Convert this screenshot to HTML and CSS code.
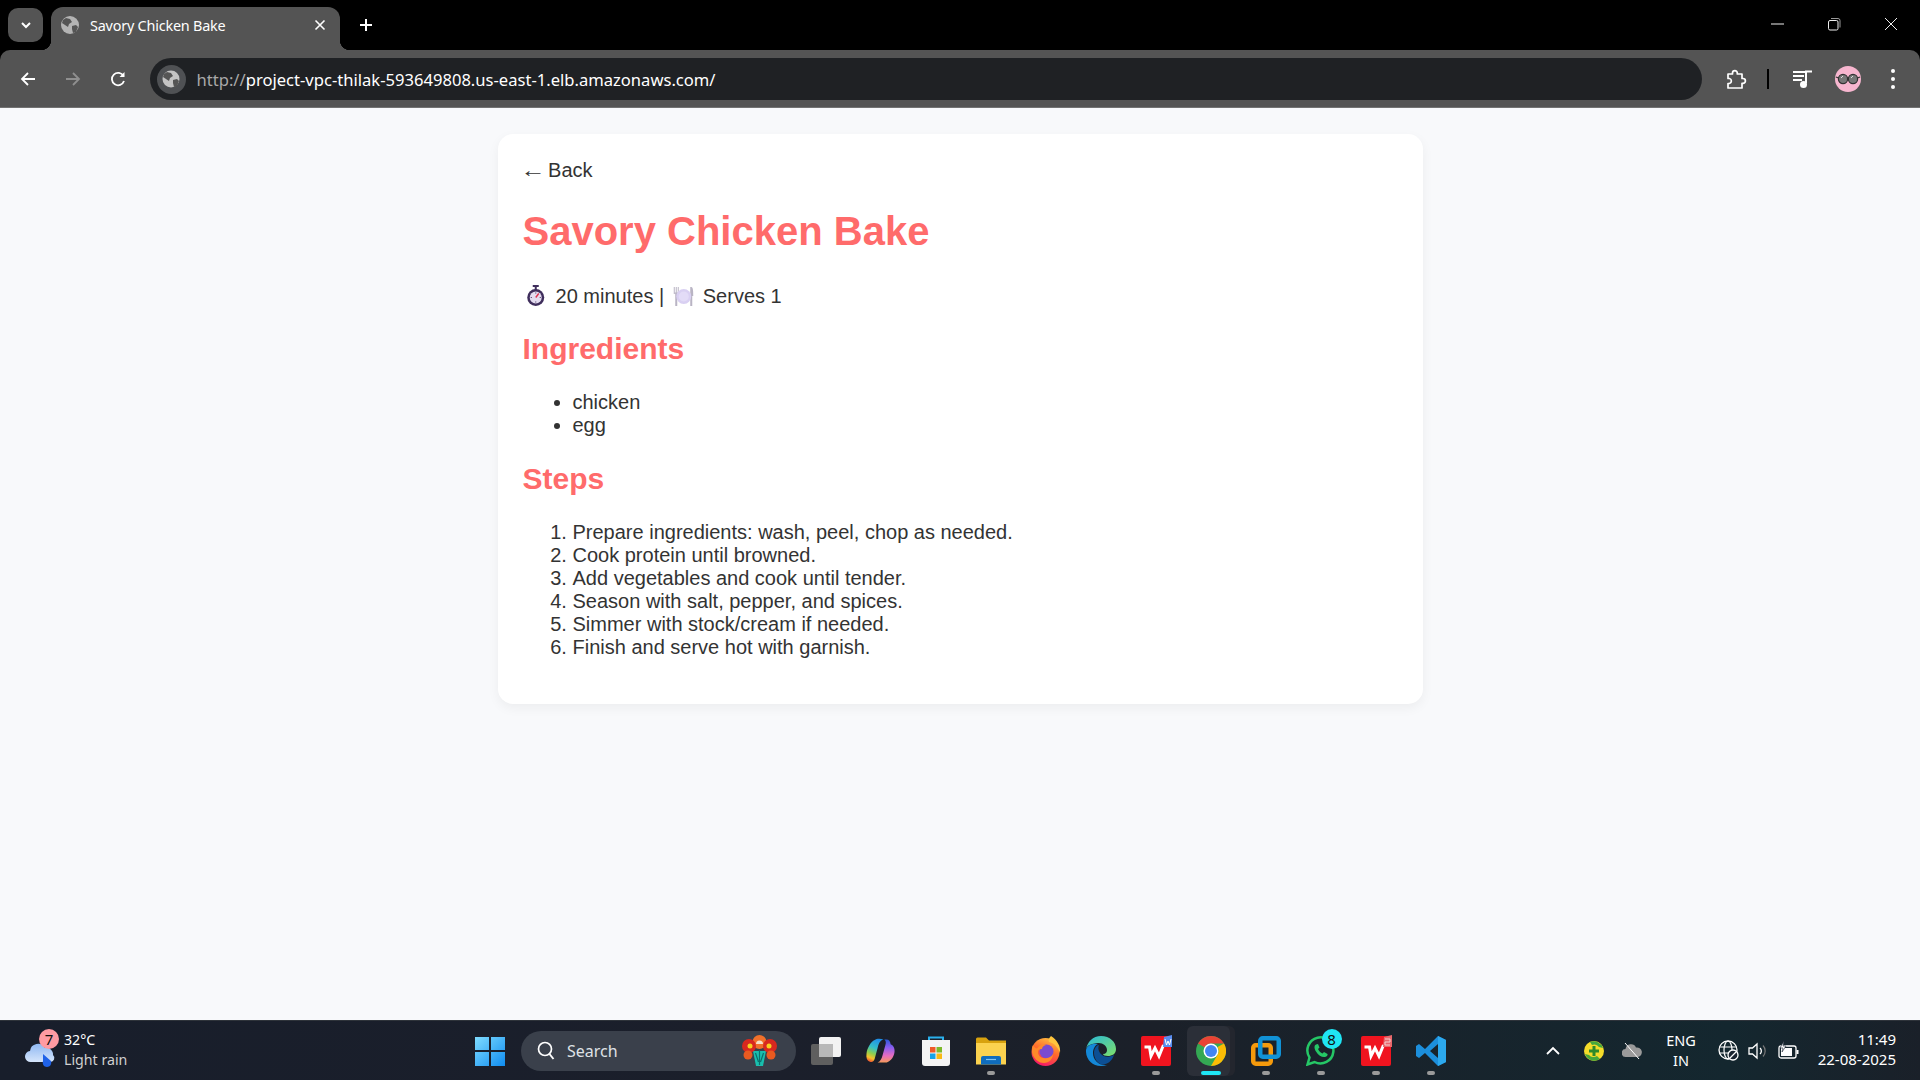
FILE: index.html
```html
<!DOCTYPE html>
<html lang="en">
<head>
<meta charset="utf-8">
<title>Savory Chicken Bake</title>
<link rel="stylesheet" href="styles.css">
</head>
<body>
<header class="browser">
  <div class="tabstrip">
    <div class="tab-toggle">
      <svg width="14" height="14" viewBox="0 0 14 14"><path d="M3 5l4 4 4-4" fill="none" stroke="#fff" stroke-width="2"/></svg>
    </div>
    <div class="tab">
      <svg class="favicon" width="18" height="18" viewBox="0 0 18 18"><circle cx="9" cy="9" r="9" fill="#b4b4b4"/><path d="M5 2l4 1 2 3-3 2-1 3-3-2-3-2 1-3zM11 10l4-1 2 2-2 5-3 1-1-4z" fill="#555"/></svg>
      <span class="tab-title">Savory Chicken Bake</span>
      <svg class="tab-close" width="12" height="12" viewBox="0 0 12 12"><path d="M1.5 1.5l9 9M10.500 1.5l-9 9" stroke="#fff" stroke-width="1.600"/></svg>
    </div>
    <svg class="newtab" width="14" height="14" viewBox="0 0 14 14"><path d="M7 1v12M1 7h12" stroke="#fff" stroke-width="2"/></svg>
    <div class="winctl">
      <svg width="14" height="14" viewBox="0 0 14 14"><path d="M1 7h13" stroke="#eee" stroke-width="1"/></svg>
      <svg width="14" height="14" viewBox="0 0 14 14"><rect x="1.500" y="3.500" width="9.500" height="9.500" rx="1.500" fill="none" stroke="#eee"/><path d="M4 1.500h7a2 2 0 0 1 2 2v7" fill="none" stroke="#999"/></svg>
      <svg width="14" height="14" viewBox="0 0 14 14"><path d="M1 1l12 12M13 1L1 13" stroke="#eee"/></svg>
    </div>
  </div>
  <div class="toolbar">
    <div class="navbtn"><svg width="18" height="18" viewBox="0 0 18 18"><path d="M16 9H3M9 3L3 9l6 6" fill="none" stroke="#fff" stroke-width="1.800"/></svg></div>
    <div class="navbtn"><svg width="18" height="18" viewBox="0 0 18 18"><path d="M2 9h13M9 3l6 6-6 6" fill="none" stroke="#8f8f8f" stroke-width="1.800"/></svg></div>
    <div class="navbtn reload"><svg width="18" height="18" viewBox="0 0 18 18"><path d="M14.500 6A6.200 6.200 0 1 0 15 11" fill="none" stroke="#fff" stroke-width="1.800"/><path d="M15.500 2v5h-5z" fill="#fff"/></svg></div>
    <div class="omnibox">
      <div class="site-chip">
        <svg width="18" height="18" viewBox="0 0 18 18"><circle cx="9" cy="9" r="8.500" fill="#c4c4c4"/><path d="M5 2l4 1 2 3-3 2-1 3-3-2-3-2 1-3zM11 10l4-1 2 2-2 5-3 1-1-4z" fill="#555"/></svg>
      </div>
      <span class="url"><span class="url-scheme">http://</span>project-vpc-thilak-593649808.us-east-1.elb.amazonaws.com/</span>
    </div>
    <div class="actions">
      <div class="navbtn"><svg width="21" height="21" viewBox="0 0 21 21"><path d="M2 5h4.500V4a2.400 2.400 0 0 1 4.800 0v1H16v4.500h1a2.400 2.400 0 0 1 0 4.800h-1V19H2v-4.500h1.500a2.600 2.600 0 0 0 0-5H2z" fill="none" stroke="#fff" stroke-width="1.700" stroke-linejoin="round"/></svg></div>
      <div class="sep"></div>
      <div class="navbtn media"><svg width="20" height="20" viewBox="0 0 20 20"><path d="M0 3h14M0 7h11M0 11h9" stroke="#fff" stroke-width="1.800"/><path d="M13 14V2.500h6" fill="none" stroke="#fff" stroke-width="2"/><circle cx="10.500" cy="15.500" r="3.500" fill="#fff"/></svg></div>
      <div class="navbtn"><svg width="26" height="26" viewBox="0 0 26 26"><circle cx="13" cy="13" r="13" fill="#f7b6cf"/><circle cx="8" cy="13" r="4.600" fill="#777" stroke="#333" stroke-width="1.200"/><circle cx="18" cy="13" r="4.600" fill="#777" stroke="#333" stroke-width="1.200"/><path d="M12 12h2M3.500 12L1 11M22.500 12l2.500-1" stroke="#333" stroke-width="1.200"/><path d="M6 12l2-2M16 12l2-2" stroke="#ddd"/></svg></div>
      <div class="navbtn"><svg width="6" height="22" viewBox="0 0 6 22"><circle cx="3" cy="3" r="2" fill="#fff"/><circle cx="3" cy="11" r="2" fill="#fff"/><circle cx="3" cy="19" r="2" fill="#fff"/></svg></div>
    </div>
  </div>
</header>

<main class="page">
  <article class="card">
    <a class="back" href="#"><span class="arrow">←</span><span class="back-label">Back</span></a>
    <h1>Savory Chicken Bake</h1>
    <p class="meta"><svg class="emoji" width="27.500" height="24" viewBox="1.500 0 25 24"><rect x="10" y="1" width="6" height="2" fill="#3f2e5c"/><rect x="12" y="2" width="2" height="4" fill="#3f2e5c"/><circle cx="13" cy="13.500" r="8.500" fill="#3f2e5c"/><circle cx="13" cy="13.500" r="6" fill="#e4dcf0"/><path d="M13 13.500l3-4" stroke="#e0304f" stroke-width="1.400"/><path d="M13 8.500v1M13 17.500v1M8 13.500h1M17 13.500h1" stroke="#3f2e5c"/></svg> 20 minutes | <svg class="emoji" width="27.500" height="24" viewBox="0 0 25 24"><path d="M3 3v7M5 3v7M7 3v7M3 9h4" stroke="#b9b4c4" stroke-width="1"/><rect x="4" y="9" width="2" height="13" fill="#b9b4c4"/><path d="M20 3c2 0 2 5 2 9h-1v10h-2V3z" fill="#b9b4c4"/><circle cx="12.500" cy="12.500" r="7.500" fill="#d9d0f2"/><circle cx="12.500" cy="12.500" r="5" fill="#e3dcf7"/></svg> Serves 1</p>
    <h2>Ingredients</h2>
    <ul>
      <li>chicken</li>
      <li>egg</li>
    </ul>
    <h2>Steps</h2>
    <ol>
      <li>Prepare ingredients: wash, peel, chop as needed.</li>
      <li>Cook protein until browned.</li>
      <li>Add vegetables and cook until tender.</li>
      <li>Season with salt, pepper, and spices.</li>
      <li>Simmer with stock/cream if needed.</li>
      <li>Finish and serve hot with garnish.</li>
    </ol>
  </article>
</main>

<footer class="taskbar">
  <div class="weather">
    <div class="weather-icon">
      <svg width="32" height="34" viewBox="0 0 32 34"><defs><linearGradient id="wc" x1="0" y1="0" x2="0" y2="1"><stop offset="0" stop-color="#8fb8f2"/><stop offset="1" stop-color="#d5e5fb"/></linearGradient></defs><path d="M7 29a5.500 5.500 0 0 1-1-11 8 8 0 0 1 15-3 6.500 6.500 0 0 1 8 7 4 4 0 0 1-3 7z" fill="url(#wc)"/><path d="M19 21l8 7c1 3-1 6-4 6s-5-3-4-6z" fill="#1f62e8"/></svg>
      <span class="weather-badge">7</span>
    </div>
    <div class="weather-text"><span>32°C</span><span class="dim">Light rain</span></div>
  </div>
  <div class="center">
    <div class="slot win">
      <svg width="30" height="30" viewBox="0 0 30 30"><defs><linearGradient id="wg" x1="0" y1="0" x2="1" y2="1"><stop offset="0" stop-color="#7fdcff"/><stop offset="1" stop-color="#0f8cf0"/></linearGradient></defs><path d="M0 1h14v13H0zM16 1h14v13H16zM0 16h14v14H0zM16 16h14v14H16z" fill="url(#wg)"/></svg>
    </div>
    <div class="search">
      <svg width="18" height="20" viewBox="0 0 18 20"><circle cx="8" cy="8" r="6.500" fill="none" stroke="#fff" stroke-width="1.700"/><path d="M12.500 13l4 5" stroke="#fff" stroke-width="1.900"/></svg>
      <span class="search-label">Search</span>
      <svg class="search-art" width="35" height="31" viewBox="0 0 35 31"><circle cx="17.500" cy="7" r="7" fill="#f0702a"/><path d="M14 9a3.500 3.500 0 0 1 7 0z" fill="#f5e0c8"/><path d="M11 16l13 0-3 15h-7z" fill="#19bfae"/><path d="M17.500 15v15M13.500 18l3 9M21.500 18l-3 9" stroke="#0b6f6c" stroke-width="1.200"/><circle cx="7" cy="11" r="7" fill="#d8281f"/><circle cx="28" cy="11" r="7" fill="#d8281f"/><circle cx="8" cy="11" r="2.500" fill="#f8d020"/><circle cx="27" cy="11" r="2.500" fill="#f8d020"/><circle cx="6" cy="20" r="4.500" fill="#e85a20"/><circle cx="29" cy="20" r="4.500" fill="#e85a20"/></svg>
    </div>
    <div class="slot taskview">
      <svg width="30" height="30" viewBox="0 0 30 30"><rect x="0" y="8" width="22" height="21" rx="2" fill="#5f5f5f"/><rect x="8" y="1" width="22" height="20" rx="2" fill="#f2f2f2"/><rect x="8" y="8" width="14" height="13" fill="#b8b8b8"/></svg>
    </div>
    <div class="slot">
      <svg width="29" height="26" viewBox="0 0 30 26"><defs><linearGradient id="cp1" x1="0.600" y1="0" x2="0.300" y2="1"><stop offset="0" stop-color="#1f8fe8"/><stop offset=".4" stop-color="#35c0c8"/><stop offset=".65" stop-color="#8ccf4f"/><stop offset=".85" stop-color="#f5c22b"/><stop offset="1" stop-color="#ef5a30"/></linearGradient><linearGradient id="cp2" x1="0.500" y1="0" x2="0.500" y2="1"><stop offset="0" stop-color="#2a58d8"/><stop offset=".35" stop-color="#8a5ef0"/><stop offset=".7" stop-color="#e66cc0"/><stop offset="1" stop-color="#f69a58"/></linearGradient></defs><path d="M9 1.500C11 0 15 0 18 1c-4 1-5 5-6 9L9 21c-1 3-3 4-5 3-3-1-4-4-3.500-8C1 10 5 3 9 1.500z" fill="url(#cp1)"/><path d="M21 1c3 0 4 2 4.500 5 2.500 1 4.500 4 4 8-.5 6-5.500 11-9.500 11h-8c3-1 4-4 5-7l3-11c1-3 .5-5-1-6z" fill="url(#cp2)"/></svg>
    </div>
    <div class="slot">
      <svg width="30" height="30" viewBox="0 0 30 30"><path d="M8 6V1.500h14V6" fill="none" stroke="#2ab0ec" stroke-width="2"/><path d="M1 4h28v23a3 3 0 0 1-3 3H4a3 3 0 0 1-3-3z" fill="#f4f4f4"/><rect x="9" y="11" width="5.500" height="5.500" fill="#ef5a28"/><rect x="15.500" y="11" width="5.500" height="5.500" fill="#7db92a"/><rect x="9" y="17.500" width="5.500" height="5.500" fill="#16a3e8"/><rect x="15.500" y="17.500" width="5.500" height="5.500" fill="#f8ba14"/></svg>
    </div>
    <div class="slot open">
      <svg width="30" height="28" viewBox="0 0 30 28"><path d="M0 2a1.500 1.500 0 0 1 1.500-1.500H10l3 3h17V27H0z" fill="#d8a20e"/><path d="M0 6h30v21.500H0z" fill="#fbd24f"/><path d="M7 19h16a2 2 0 0 1 2 2v6.500H5V21a2 2 0 0 1 2-2z" fill="#0f6cbd"/><path d="M10 22.500h10" stroke="#7fc4f2" stroke-width="1.200"/></svg>
    </div>
    <div class="slot">
      <svg width="30" height="30" viewBox="0 0 30 30"><defs><linearGradient id="ff" x1="0.700" y1="0" x2="0.300" y2="1"><stop offset="0" stop-color="#ffbd3f"/><stop offset=".45" stop-color="#ff6b2c"/><stop offset="1" stop-color="#f5156c"/></linearGradient></defs><circle cx="14.500" cy="16" r="14" fill="url(#ff)"/><path d="M20 0c6 4 10 10 9 17-2-6-6-10-11-11-1-2 0-4 2-6z" fill="#ffc53d"/><circle cx="15.500" cy="15.500" r="7" fill="#7a4bd0"/><path d="M2 9c1 2 2 3 4 3.500C8 9 12 8 15 9c-3 1-4 2.500-4 4-3 0-4 1-4 3 0 4 4 7 9 6 3-.5 5-2 6-4 0 5-4 9-9 9-6 0-11-5-12-11 0-3 0-5 1-7z" fill="#ff8a2a"/></svg>
    </div>
    <div class="slot">
      <svg width="30" height="30" viewBox="0 0 30 30"><defs><linearGradient id="ed" x1="0" y1="0" x2="1" y2="1"><stop offset="0" stop-color="#28b8d8"/><stop offset="1" stop-color="#7fe06a"/></linearGradient></defs><path d="M0 14C1 6 7 0 15 0c9 0 15 6 15 13 0 5-4 7-8 7-3 0-5-1-5-2 3 0 4-2 4-4 0-4-4-7-8-7-6 0-13 2-13 7z" fill="url(#ed)"/><path d="M0 14c1-5 7-7 12-6-3 1-5 5-5 9 0 7 6 13 14 12-2 .7-4 1-6 1C6 30-.5 23 0 14z" fill="#1488d8"/><path d="M8 17c0-5 3-8 5-8-1 2-1 5 1 8 3 4 8 5 14 2-2 6-7 10-12 9.500-4-.5-8-6-8-11.500z" fill="#0c4f94"/></svg>
    </div>
    <div class="slot open">
      <svg width="34" height="32" viewBox="0 0 34 32"><rect x="2" y="1" width="30" height="30" rx="2" fill="#f0141f"/><path d="M5.500 12h5l1.500 9 4-8 4 8 4.500-11" fill="none" stroke="#fff" stroke-width="3"/><path d="M25 2l8-2v12H24z" fill="#5a8df0"/><path d="M26 4l1.500 6 1.500-4 1.500 4 1.500-6" fill="none" stroke="#fff"/></svg>
    </div>
    <div class="slot active">
      <svg width="30" height="30" viewBox="1 1 30 30"><circle cx="16" cy="16" r="15" fill="#34a853"/><path d="M16 1a15 15 0 0 1 13 7.500H16a7.500 7.500 0 0 0-6.500 3.750L3 8.500A15 15 0 0 1 16 1z" fill="#ea4335"/><path d="M29 8.500A15 15 0 0 1 16 31l6.500-11.250A7.500 7.500 0 0 0 22.500 12z" fill="#fbbc05"/><circle cx="16" cy="16" r="7.500" fill="#fff"/><circle cx="16" cy="16" r="6" fill="#4285f4"/></svg>
    </div>
    <div class="slot open">
      <svg width="30" height="30" viewBox="0 0 30 30"><rect x="2.250" y="9.250" width="17.500" height="18.500" rx="2.500" fill="none" stroke="#f59a0c" stroke-width="4.500"/><rect x="9.250" y="2.250" width="18.500" height="18.500" rx="2.500" fill="none" stroke="#1192d6" stroke-width="4.500"/></svg>
    </div>
    <div class="slot open">
      <svg width="30" height="30" viewBox="0 0 30 30"><path d="M1.500 28.500l2-7A13 13 0 1 1 8.500 26z" fill="none" stroke="#25c766" stroke-width="2.500"/><path d="M10 8.500c-2 1-2 4 0 7 2.500 4 6 6 9 5.500 2-.5 3-2 2.500-3l-3.500-2-1.500 1.500c-2-1-3.500-2.500-4.500-4.500l1.500-1.500-1.500-3.500z" fill="#25c766"/></svg>
      <span class="task-badge">8</span>
    </div>
    <div class="slot open">
      <svg width="34" height="32" viewBox="0 0 34 32"><rect x="2" y="1" width="30" height="30" rx="2" fill="#f0141f"/><path d="M5.500 12h5l1.500 9 4-8 4 8 4.500-11" fill="none" stroke="#fff" stroke-width="3"/><path d="M25 2l8-2v12H24z" fill="#e8686c"/><path d="M26 4h5v3h-5v3h5" fill="none" stroke="#f4d0d0"/></svg>
    </div>
    <div class="slot open">
      <svg width="30" height="30" viewBox="0 0 30 30"><path d="M22 0l8 4v22l-8 4L9 17l-6 5-3-2V10l3-2 6 5zM22 8l-8 7 8 7z" fill="#1c8fdc" fill-rule="evenodd"/><path d="M22 0l8 4v22l-8 4z" fill="#2ca9ee"/></svg>
    </div>
  </div>
  <div class="tray">
    <svg class="tray-chevron" width="14" height="10" viewBox="0 0 14 10"><path d="M1 8l6-6 6 6" fill="none" stroke="#fff" stroke-width="1.800"/></svg>
    <svg class="tray-360" width="20" height="20" viewBox="0 0 20 20"><circle cx="10" cy="10" r="10" fill="#f5dc2a"/><path d="M1 13a10 10 0 0 0 15 5l-3-3a6 6 0 0 1-8-1zM19 7a10 10 0 0 0-13-6l2 3a6 6 0 0 1 7 2z" fill="#46a83c"/><path d="M10 5v10M5 10h10" stroke="#2e8a2a" stroke-width="3"/></svg>
    <svg class="tray-cloud" width="20" height="18" viewBox="0 0 20 18"><path d="M4 15a4 4 0 0 1-.5-8A5.500 5.500 0 0 1 14 5.500 4.800 4.800 0 0 1 16 15z" fill="#9a9a9a"/><path d="M3 1l14 16" stroke="#fff"/></svg>
    <div class="lang"><span>ENG</span><span>IN</span></div>
    <svg class="tray-globe" width="21" height="21" viewBox="0 0 21 21"><circle cx="10" cy="10" r="9" fill="none" stroke="#fff" stroke-width="1.300"/><ellipse cx="10" cy="10" rx="4" ry="9" fill="none" stroke="#fff" stroke-width="1.200"/><path d="M1.500 7h17M1.500 13h17" stroke="#fff" stroke-width="1.200"/><circle cx="15" cy="15" r="5" fill="#1a2430" stroke="#fff" stroke-width="1.300"/><path d="M12 18l6-6" stroke="#fff" stroke-width="1.200"/></svg>
    <svg class="tray-vol" width="20" height="18" viewBox="0 0 20 18"><path d="M1 6h3.500L9 2v14l-4.500-4H1z" fill="none" stroke="#fff" stroke-width="1.300"/><path d="M12 6a4 4 0 0 1 0 6" fill="none" stroke="#fff" stroke-width="1.300"/><path d="M15 3.500a8 8 0 0 1 0 11" fill="none" stroke="#777" stroke-width="1.200"/></svg>
    <svg class="tray-batt" width="21" height="20" viewBox="0 0 21 20"><rect x="1" y="5" width="17" height="12" rx="2" fill="none" stroke="#fff" stroke-width="1.300"/><rect x="3" y="7" width="11" height="8" fill="#fff"/><rect x="18.500" y="9" width="2" height="4" fill="#fff"/><path d="M6 0L2 7h3L4 11l4-6H5z" fill="#fff" stroke="#1a2430" stroke-width=".6"/></svg>
    <div class="clock"><span>11:49</span><span>22-08-2025</span></div>
  </div>
</footer>
</body>
</html>
```

FILE: styles.css
```css
* { box-sizing: border-box; }
html, body { height: 100%; }
body {
  margin: 0;
  height: 100vh;
  display: flex;
  flex-direction: column;
  overflow: hidden;
  background: #f8f9fb;
  font-family: "Liberation Sans", Arial, sans-serif;
  font-size: 20px;
  color: #333;
}

/* Browser chrome */
.browser { flex: none; height: 108px; background: #000; font-family: "Noto Sans", sans-serif; }
.tabstrip { height: 50px; display: flex; align-items: flex-end; padding-left: 8px; }
.tab-toggle {
  width: 35px; height: 34px; margin-bottom: 8px; border-radius: 10px;
  background: #545454; display: flex; align-items: center; justify-content: center;
}
.tab {
  position: relative;
  width: 289px; height: 43px; margin-left: 8px; padding: 0 14px 7px 10px;
  background: #545454; border-radius: 12px 12px 0 0;
  display: flex; align-items: center; color: #fff;
}
.tab::before, .tab::after {
  content: ""; position: absolute; bottom: 0; width: 10px; height: 10px;
}
.tab::before { left: -10px; background: radial-gradient(circle at 0 0, #000 10px, #545454 10.500px); }
.tab::after { right: -10px; background: radial-gradient(circle at 100% 0, #000 10px, #545454 10.500px); }
.favicon { flex: none; }
.tab-title { margin-left: 11px; font-size: 14.400px; flex: 1; white-space: nowrap; letter-spacing: -0.200px; }
.tab-close { flex: none; }
.newtab { margin: 0 0 18px 19px; }
.winctl { margin-left: auto; align-self: flex-start; display: flex; padding: 17px 22px 0 0; gap: 43px; }
.toolbar {
  height: 57px; background: #545454; border-radius: 10px 10px 0 0;
  display: flex; align-items: center; padding: 1px 5px 0;
}
.browser::after { content: ""; display: block; height: 1px; background: #727272; }
.navbtn { flex: none; width: 45.500px; height: 40px; display: flex; align-items: center; justify-content: center; }
.reload { padding-right: 2px; }
.omnibox {
  flex: 1; height: 42px; margin-left: 8px; border-radius: 21px; background: #1f2124;
  display: flex; align-items: center; padding-left: 7px;
}
.site-chip {
  width: 29px; height: 29px; border-radius: 50%; background: #4f5154;
  display: flex; align-items: center; justify-content: center;
}
.url { margin-left: 11px; font-size: 16.580px; color: #fff; white-space: nowrap; }
.url-scheme { color: #a8a8a8; }
.actions { flex: none; display: flex; align-items: center; margin-left: 12px; }
.actions .navbtn { width: 45px; }
.actions .media { margin-left: 2px; }
.sep { width: 2px; height: 20px; margin: 0 9px 0 8px; background: #000; }

/* Page */
.page { flex: 1; min-height: 0; }
.card {
  width: 925px; margin: 26px auto 0; padding: 25px;
  background: #fff; border-radius: 15px;
  box-shadow: 0 4px 12px rgba(0, 0, 0, 0.05);
}
.back { display: block; color: #333; text-decoration: none; }
.arrow { display: inline-block; transform: scaleX(1.270); }
.back-label { margin-left: 5.560px; }
h1 { margin: 26.800px 0 0; font-size: 40px; color: #ff6b6b; }
h2 { margin: 25px 0; font-size: 30px; color: #ff6b6b; }
.meta { margin: 29px 0 23.500px; line-height: 26px; }
.meta + h2 { margin-top: 0; }
.emoji { vertical-align: -5px; }
ul, ol { margin: 25px 0 20px; padding-left: 50px; }
ul { margin-bottom: 25px; }
ul + h2 { margin-top: 0; }

/* Taskbar */
.taskbar {
  flex: none; height: 60px; display: flex; align-items: center; color: #fff;
  background: linear-gradient(90deg, #181e2b 0%, #1b1f2b 40%, #1b2029 60%, #14272f 90%, #1a2029 100%);
  border-top: 1px solid #2e333a;
  font-family: "Noto Sans", sans-serif;
}
.weather { flex: none; width: 469px; display: flex; align-items: center; padding-left: 24px; font-size: 14.200px; }
.weather-icon { position: relative; width: 32px; height: 36px; }
.weather-badge {
  position: absolute; left: 15px; top: -3.500px; width: 20px; height: 20px; border-radius: 50%;
  background: #ff9ba3; color: #111; font-size: 15px; line-height: 20px; text-align: center;
}
.weather-text { display: flex; flex-direction: column; margin-left: 8px; padding-bottom: 1px; line-height: 20px; }
.dim { color: #d0d0d0; }
.center { flex: none; display: flex; align-items: center; }
.slot { position: relative; flex: none; width: 55px; height: 50px; display: flex; align-items: center; justify-content: center; }
.win { width: 42px; }
.open::after {
  content: ""; position: absolute; left: 23.500px; bottom: 1px; width: 8px; height: 4px;
  border-radius: 2px; background: #9a9a9a;
}
.active::before {
  content: ""; position: absolute; z-index: 0; left: 3.500px; top: 0; width: 43px; height: 50px;
  border-radius: 6px; background: #2b2f38; box-shadow: 5px 0 0 #23262e;
}
.active svg { position: relative; }
.active::after {
  content: ""; position: absolute; left: 17.500px; bottom: 1px; width: 20px; height: 4px;
  border-radius: 2px; background: #1fe6f5;
}
.search {
  flex: none; width: 275px; height: 40px; margin: 0 2px 0 10px; padding: 0 19px 0 16px;
  border-radius: 20px; background: #3a404b; display: flex; align-items: center;
}
.search-label { margin-left: 12px; font-size: 16px; color: #dfe2e6; flex: 1; }
.task-badge {
  position: absolute; left: 28.500px; top: 3.500px; width: 20px; height: 20px; border-radius: 50%;
  background: #1fe6f5; color: #111; font-size: 15px; line-height: 20px; text-align: center;
}
.tray { flex: 1; display: flex; align-items: center; font-size: 14px; }
.tray-chevron { margin-left: 88px; }
.tray-360 { margin-left: 24px; }
.tray-cloud { margin-left: 18px; }
.lang { width: 42px; margin-left: 18px; padding-bottom: 1px; display: flex; flex-direction: column; align-items: center; line-height: 20px; font-size: 14.500px; }
.tray-globe { margin-left: 16px; }
.tray-vol { margin-left: 9px; }
.tray-batt { margin-left: 10px; }
.clock { margin-left: auto; padding: 0 24px 3px 0; display: flex; flex-direction: column; align-items: flex-end; line-height: 20px; font-size: 15px; }
```
